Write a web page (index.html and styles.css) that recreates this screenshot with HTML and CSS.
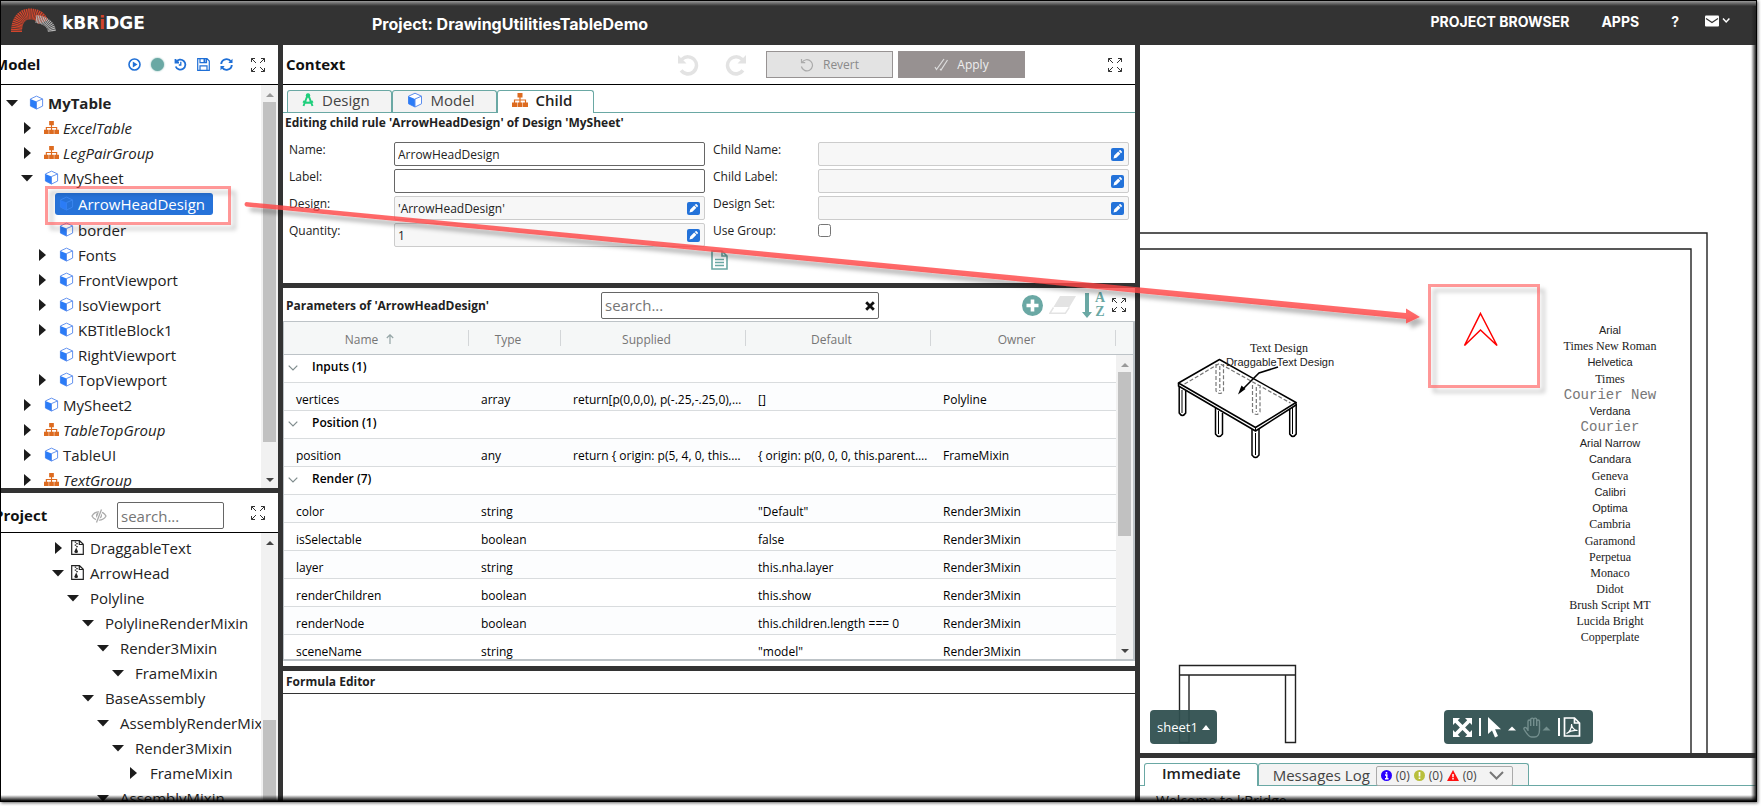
FILE: index.html
```html
<!DOCTYPE html>
<html lang="en">
<head>
<meta charset="utf-8">
<title>kBridge - DrawingUtilitiesTableDemo</title>
<link rel="stylesheet" href="styles.css">
</head>
<body>
<svg class="defs" aria-hidden="true">
  <symbol id="cube" viewBox="0 0 16 16"><path d="M1.5 4.2 8 1.2l6.500 3v7.600L8 15l-6.500-3.200z" fill="#fff" stroke="#5b8dee"/><path d="M1.500 4.200 8 7v8l-6.500-3.200z" fill="#2b7cf7"/><path d="M8 7l6.500-2.800" fill="none" stroke="#5b8dee"/><path d="M8 7v8" stroke="#5b8dee"/></symbol>
  <symbol id="cube-sel" viewBox="0 0 16 16"><path d="M1.500 4.200 8 1.200l6.500 3v7.600L8 15l-6.500-3.200zM8 7l6.500-2.800M8 7v8" fill="none" stroke="#3c86f0"/><path d="M1.500 4.200 8 7v8l-6.500-3.200z" fill="#2b7cf7"/></symbol>
  <symbol id="sitemap" viewBox="0 0 16 14"><path d="M5.500 0h5v4.500h-5zM0 9.500h5V14H0zM5.500 9.500h5V14h-5zM11 9.500h5V14h-5z" fill="#dd6b20"/><path d="M8 4v6M2.500 10V7h11v3" fill="none" stroke="#dd6b20" stroke-width="1.200"/></symbol>
  <symbol id="down" viewBox="0 0 12 8"><path d="M0 1h12L6 7.500z" fill="#1c1c1c"/></symbol>
  <symbol id="right" viewBox="0 0 8 12"><path d="M1 0v12L8 6z" fill="#1c1c1c"/></symbol>
  <symbol id="expand" viewBox="0 0 14 14"><path d="M.5 4V.5H4M.5.5l4.500 4.500M10 .5h3.500V4M13.500.5 9 5M.5 10v3.500H4M.5 13.500 5 9M10 13.500h3.500V10M13.500 13.500 9 9" fill="none" stroke="#333"/></symbol>
  <symbol id="archive" viewBox="0 0 13 15"><path d="M.7.7h7.800l3.800 3.600v10H.7zM8.300.7v3.800h4" fill="none" stroke="#222" stroke-width="1.200"/><path d="M4.500 1.500v1.200M6 3v1.200M4.500 4.500v1.200M6 6v1.200" stroke="#222" stroke-width="1.500"/><path d="M5.200 7.500l1.800 4a1.800 1.600 0 1 1-3.600 0z" fill="#222"/></symbol>
  <symbol id="pencil" viewBox="0 0 13 13"><rect width="13" height="13" rx="2" fill="#2372d9"/><path d="M2.500 10.500l.7-2.900 4-4 2.200 2.200-4 4zM7.800 3l.8-.8c.3-.3.7-.3 1 0l1.200 1.200c.3.300.3.700 0 1l-.8.800z" fill="#fff"/></symbol>
  <symbol id="undo" viewBox="0 0 22 22"><path d="M1 1v8.500h8.500L6.300 6.300a6.800 6.800 0 1 1-.8 9l-2.800 2.300A10.300 10.300 0 1 0 3.900 3.900z" fill="#e3e3e3"/></symbol>
  <symbol id="chev" viewBox="0 0 10 6"><path d="M.7.700 5 5 9.300.7" fill="none" stroke="#7f8c8d" stroke-width="1.200"/></symbol>
</svg>

<div class="app">
  <header class="topbar">
    <div class="brand">
      <svg class="logo" viewBox="0 0 46 24" aria-hidden="true">
        <g fill="none"><path d="M5.500 24c0-11 5-18 13.500-18 7 0 11 3 13 8" stroke="#d2452c" stroke-dasharray="1.200 .5" stroke-width="11"/><path d="M25 11c8 1 15 4 16 13" stroke="#b8b8b8" stroke-dasharray="1 .6" stroke-width="8"/></g>
      </svg>
      <span class="brand-name">kBR<span class="brand-dot">i</span>DGE</span>
    </div>
    <h1 class="project-title">Project: DrawingUtilitiesTableDemo</h1>
    <nav class="nav">
      <a href="#">PROJECT BROWSER</a><a href="#">APPS</a><a href="#">?</a>
      <a href="#" class="mail" aria-label="Messages"><svg width="25" height="12" viewBox="0 0 25 12"><path d="M0 1.500Q0 .5 1 .5h12q1 0 1 1v9q0 1-1 1H1q-1 0-1-1z" fill="#fff"/><path d="M1 3.500l6 4 6-4" fill="none" stroke="#333" stroke-width="1.200"/><path d="M18 3.500l3.200 3.500 3.200-3.500" fill="none" stroke="#fff" stroke-width="1.500"/></svg></a>
    </nav>
  </header>

  <main class="workspace">
    <div class="col">
      <section class="panel model">
        <div class="bar left-bar">
          <h2 class="cut">Model</h2>
          <div class="model-tools">
            <button class="ib" aria-label="Run"><svg width="13" height="13" viewBox="0 0 13 13"><circle cx="6.500" cy="6.500" r="5.500" fill="none" stroke="#1f6fd6" stroke-width="1.600"/><path d="M4.800 3.500v6l4.700-3z" fill="#1f6fd6"/></svg></button>
            <span class="dot"></span>
            <button class="ib" aria-label="History"><svg width="13" height="13" viewBox="0 0 13 13"><path d="M1.500 1v3.500H5M2 4.200a5 5 0 1 1-.3 4.300" fill="none" stroke="#1f6fd6" stroke-width="1.800"/><path d="M6.800 3.800V7H4.800" fill="none" stroke="#1f6fd6" stroke-width="1.300"/></svg></button>
            <button class="ib" aria-label="Save"><svg width="13" height="13" viewBox="0 0 13 13"><path d="M.7.700h9.300l2.300 2.300v9.300H.7zM3 .7v4h6.500v-4M3 12V7.800h7V12" fill="none" stroke="#1f6fd6" stroke-width="1.200"/><path d="M6.500 1h2v3h-2z" fill="#1f6fd6"/></svg></button>
            <button class="ib" aria-label="Refresh"><svg width="13" height="13" viewBox="0 0 13 13"><path d="M1.200 6a5.300 5.300 0 0 1 9.800-2.300M11.800 7A5.300 5.300 0 0 1 2 9.300" fill="none" stroke="#1f6fd6" stroke-width="1.900"/><path d="M12.500.8V5H8.300zM.5 12.200V8h4.200z" fill="#1f6fd6"/></svg></button>
            <button class="ib big" aria-label="Expand"><svg width="14" height="14"><use href="#expand"/></svg></button>
          </div>
        </div>
        <div class="tree-wrap">
          <ul class="tree">
            <li class="l0 b"><svg class="car"><use href="#down"/></svg><svg class="ic"><use href="#cube"/></svg>MyTable</li>
            <li class="l1 i"><svg class="car"><use href="#right"/></svg><svg class="ic"><use href="#sitemap"/></svg>ExcelTable</li>
            <li class="l1 i"><svg class="car"><use href="#right"/></svg><svg class="ic"><use href="#sitemap"/></svg>LegPairGroup</li>
            <li class="l1"><svg class="car"><use href="#down"/></svg><svg class="ic"><use href="#cube"/></svg>MySheet</li>
            <li class="l2 current"><span class="car"></span><span class="sel"><svg class="ic"><use href="#cube-sel"/></svg>ArrowHeadDesign</span></li>
            <li class="l2"><span class="car"></span><svg class="ic"><use href="#cube"/></svg>border</li>
            <li class="l2"><svg class="car"><use href="#right"/></svg><svg class="ic"><use href="#cube"/></svg>Fonts</li>
            <li class="l2"><svg class="car"><use href="#right"/></svg><svg class="ic"><use href="#cube"/></svg>FrontViewport</li>
            <li class="l2"><svg class="car"><use href="#right"/></svg><svg class="ic"><use href="#cube"/></svg>IsoViewport</li>
            <li class="l2"><svg class="car"><use href="#right"/></svg><svg class="ic"><use href="#cube"/></svg>KBTitleBlock1</li>
            <li class="l2"><span class="car"></span><svg class="ic"><use href="#cube"/></svg>RightViewport</li>
            <li class="l2"><svg class="car"><use href="#right"/></svg><svg class="ic"><use href="#cube"/></svg>TopViewport</li>
            <li class="l1"><svg class="car"><use href="#right"/></svg><svg class="ic"><use href="#cube"/></svg>MySheet2</li>
            <li class="l1 i"><svg class="car"><use href="#right"/></svg><svg class="ic"><use href="#sitemap"/></svg>TableTopGroup</li>
            <li class="l1"><svg class="car"><use href="#right"/></svg><svg class="ic"><use href="#cube"/></svg>TableUI</li>
            <li class="l1 i"><svg class="car"><use href="#right"/></svg><svg class="ic"><use href="#sitemap"/></svg>TextGroup</li>
          </ul>
          <div class="sb"><span class="up dim"></span><span class="thumb t-model"></span><span class="dn"></span></div>
        </div>
      </section>

      <section class="panel project">
        <div class="bar left-bar low">
          <h2 class="cut">Project</h2>
          <div class="project-tools">
            <svg width="16" height="14" viewBox="0 0 16 14" aria-hidden="true"><path d="M1 7c3-5.500 11-5.500 14 0-3 5.500-11 5.500-14 0z" fill="none" stroke="#aaa" stroke-width="1.300"/><circle cx="8" cy="6.500" r="3" fill="#aaa"/><path d="M10.500.5l-5 13" stroke="#fff" stroke-width="3"/><path d="M10.500.5l-5 13" stroke="#aaa" stroke-width="1.300"/></svg>
            <input class="search small" type="text" placeholder="search..." aria-label="Search project">
            <button class="ib big" aria-label="Expand"><svg width="14" height="14"><use href="#expand"/></svg></button>
          </div>
        </div>
        <div class="tree-wrap">
          <ul class="tree plain">
            <li class="l3"><svg class="car"><use href="#right"/></svg><svg class="ic"><use href="#archive"/></svg>DraggableText</li>
            <li class="l3"><svg class="car"><use href="#down"/></svg><svg class="ic"><use href="#archive"/></svg>ArrowHead</li>
            <li class="l4"><svg class="car"><use href="#down"/></svg>Polyline</li>
            <li class="l5"><svg class="car"><use href="#down"/></svg>PolylineRenderMixin</li>
            <li class="l6"><svg class="car"><use href="#down"/></svg>Render3Mixin</li>
            <li class="l7"><svg class="car"><use href="#down"/></svg>FrameMixin</li>
            <li class="l5"><svg class="car"><use href="#down"/></svg>BaseAssembly</li>
            <li class="l6"><svg class="car"><use href="#down"/></svg>AssemblyRenderMixin</li>
            <li class="l7"><svg class="car"><use href="#down"/></svg>Render3Mixin</li>
            <li class="l8"><svg class="car"><use href="#right"/></svg>FrameMixin</li>
            <li class="l6"><svg class="car"><use href="#down"/></svg>AssemblyMixin</li>
          </ul>
          <div class="sb"><span class="up"></span><span class="thumb t-project"></span></div>
        </div>
      </section>
    </div>

    <div class="col">
      <section class="panel context">
        <div class="bar">
          <h2>Context</h2>
          <div class="context-tools">
            <button class="ib undo" aria-label="Undo" disabled><svg width="22" height="22"><use href="#undo"/></svg></button>
            <button class="ib redo" aria-label="Redo" disabled><svg width="22" height="22" viewBox="0 0 22 22"><path d="M21 1v8.500h-8.500l3.200-3.200a6.800 6.800 0 1 0 .8 9l2.800 2.300A10.300 10.300 0 1 1 18.100 3.900z" fill="#e3e3e3"/></svg></button>
            <button class="act revert" disabled><svg width="14" height="14" viewBox="0 0 14 14"><path d="M1.500 1v3.700h3.700M2 4.500a5.600 5.600 0 1 1-.6 4" fill="none" stroke="#aaa" stroke-width="1.200"/></svg>Revert</button>
            <button class="act apply" disabled><svg width="14" height="14" viewBox="0 0 14 14"><path d="M1 9l1.500 2.500L10 1M6 11l1 1L13.500 2" fill="none" stroke="#ddd" stroke-width="1.200"/></svg>Apply</button>
            <button class="ib big" aria-label="Expand"><svg width="14" height="14"><use href="#expand"/></svg></button>
          </div>
        </div>
        <div class="tabs">
          <button class="tab"><svg width="12" height="14" viewBox="0 0 12 14"><path d="M6 1 1.500 13M6 1l4.500 12M1 8.500c3 1.500 7 1.500 10 0" fill="none" stroke="#1fcf7c" stroke-width="2"/><circle cx="6" cy="2.500" r="2.200" fill="#1fcf7c"/></svg>Design</button>
          <button class="tab"><svg width="16" height="16"><use href="#cube"/></svg>Model</button>
          <button class="tab on"><svg width="16" height="14"><use href="#sitemap"/></svg>Child</button>
        </div>
        <p class="editing">Editing child rule 'ArrowHeadDesign' of Design 'MySheet'</p>
        <form class="form">
          <label for="f-name">Name:</label><div class="field"><input id="f-name" type="text" value="ArrowHeadDesign"></div>
          <label class="c3" for="f-cname">Child Name:</label><div class="field"><input id="f-cname" class="ro" type="text" readonly><svg class="pen"><use href="#pencil"/></svg></div>
          <label for="f-label">Label:</label><div class="field"><input id="f-label" type="text"></div>
          <label class="c3" for="f-clabel">Child Label:</label><div class="field"><input id="f-clabel" class="ro" type="text" readonly><svg class="pen"><use href="#pencil"/></svg></div>
          <label for="f-design">Design:</label><div class="field"><input id="f-design" class="ro" type="text" readonly value="'ArrowHeadDesign'"><svg class="pen"><use href="#pencil"/></svg></div>
          <label class="c3" for="f-set">Design Set:</label><div class="field"><input id="f-set" class="ro" type="text" readonly><svg class="pen"><use href="#pencil"/></svg></div>
          <label for="f-qty">Quantity:</label><div class="field"><input id="f-qty" class="ro" type="text" readonly value="1"><svg class="pen"><use href="#pencil"/></svg></div>
          <label class="c3" for="f-group">Use Group:</label><div class="field"><input id="f-group" type="checkbox"></div>
          <button type="button" class="ib doc" aria-label="Description"><svg width="17" height="20" viewBox="0 0 17 20"><path d="M1 1h10l5 5v13H1zM11 1v5h5" fill="none" stroke="#6aa8a4" stroke-width="1.600"/><path d="M4 9.500h9M4 12.500h9M4 15.500h9" stroke="#6aa8a4" stroke-width="1.500"/></svg></button>
        </form>
      </section>

      <section class="panel params">
        <div class="pbar">
          <h3>Parameters of 'ArrowHeadDesign'</h3>
          <div class="psearch"><input class="search" type="text" placeholder="search..." aria-label="Search parameters"><svg class="clear" width="10" height="10" viewBox="0 0 10 10"><path d="M1.200 1.200l7.600 7.600M8.800 1.200 1.200 8.800" stroke="#111" stroke-width="2.800"/></svg></div>
          <div class="ptools">
            <button class="ib" aria-label="Add"><svg width="21" height="21" viewBox="0 0 21 21"><circle cx="10.500" cy="10.500" r="10.500" fill="#6aa8a4"/><path d="M10.500 4.500v12M4.500 10.500h12" stroke="#fff" stroke-width="3.600"/></svg></button>
            <button class="ib" aria-label="Erase"><svg width="27" height="18" viewBox="0 0 27 18"><path d="M11 0h16l-6.500 11H4.500z" fill="#e3e3e3"/><path d="M4.500 11.500.800 17.300h15.500l4-6" fill="none" stroke="#e3e3e3" stroke-width="1.500"/></svg></button>
            <button class="ib sort" aria-label="Sort A to Z"><svg width="10" height="25" viewBox="0 0 10 25"><path d="M3 0h4v19h3l-5 6-5-6h3z" fill="#6aa8a4"/></svg><span class="az"><span>A</span><span>Z</span></span></button>
            <button class="ib" aria-label="Expand"><svg width="14" height="14"><use href="#expand"/></svg></button>
          </div>
        </div>
        <div class="grid-wrap">
          <table class="grid">
            <colgroup><col class="w-name"><col class="w-type"><col class="w-wide"><col class="w-wide"><col class="w-wide"><col class="w-end"></colgroup>
            <thead><tr><th>Name<svg class="asc" width="8" height="10" viewBox="0 0 8 10"><path d="M4 10V1M.8 4 4 .8 7.200 4" fill="none" stroke="#95a5a6" stroke-width="1.200"/></svg></th><th>Type</th><th>Supplied</th><th>Default</th><th>Owner</th><th class="end"></th></tr></thead>
            <tbody>
              <tr class="grp"><td colspan="6"><svg class="chev"><use href="#chev"/></svg>Inputs (1)</td></tr>
              <tr class="alt"><td>vertices</td><td>array</td><td>return[p(0,0,0), p(-.25,-.25,0),…</td><td>[]</td><td>Polyline</td><td></td></tr>
              <tr class="grp"><td colspan="6"><svg class="chev"><use href="#chev"/></svg>Position (1)</td></tr>
              <tr class="alt"><td>position</td><td>any</td><td>return { origin: p(5, 4, 0, this.…</td><td>{ origin: p(0, 0, 0, this.parent.…</td><td>FrameMixin</td><td></td></tr>
              <tr class="grp"><td colspan="6"><svg class="chev"><use href="#chev"/></svg>Render (7)</td></tr>
              <tr class="alt"><td>color</td><td>string</td><td></td><td>"Default"</td><td>Render3Mixin</td><td></td></tr>
              <tr><td>isSelectable</td><td>boolean</td><td></td><td>false</td><td>Render3Mixin</td><td></td></tr>
              <tr class="alt"><td>layer</td><td>string</td><td></td><td>this.nha.layer</td><td>Render3Mixin</td><td></td></tr>
              <tr><td>renderChildren</td><td>boolean</td><td></td><td>this.show</td><td>Render3Mixin</td><td></td></tr>
              <tr class="alt"><td>renderNode</td><td>boolean</td><td></td><td>this.children.length === 0</td><td>Render3Mixin</td><td></td></tr>
              <tr><td>sceneName</td><td>string</td><td></td><td>"model"</td><td>Render3Mixin</td><td></td></tr>
            </tbody>
          </table>
          <div class="sb"><span class="up dim"></span><span class="thumb t-params"></span><span class="dn"></span></div>
        </div>
      </section>

      <section class="panel formula"><h3>Formula Editor</h3></section>
    </div>

    <div class="col">
      <section class="panel canvas">
        <svg class="sheet" width="620" height="720" viewBox="1140 45 620 720">
          <g fill="none" stroke="#222" stroke-width="1.400">
            <path d="M1130 233h577v600M1130 249h561v600"/>
            <path d="M1179.500 665.500h116v9.500h-116zM1179.500 675v67.500h9.500V675M1285.500 675v67.500h10V675"/>
          </g>
          <g fill="#fff" stroke="#000" stroke-width="1.500" stroke-linejoin="round">
            <path d="M1179.200 387v26q3.200 5 6.500 0v-22M1215.500 408v26q3.500 5 7 0v-21M1289.700 408v26q3.200 5 6.500 0v-30M1252 428v27q3.500 5 7 0v-26"/>
            <path d="M1178.500 383v3l77 45 40.500-26v-3"/>
            <path d="M1219.500 359.500 1178.500 383l77 44.500 40.500-25z"/>
            <path d="M1255.500 427.500v3M1182 390v23M1218.500 411v23M1255.500 433v22M1292.500 408v26" stroke-width="1"/>
          </g>
          <g fill="none" stroke="#777" stroke-width="1.200" stroke-dasharray="4 2">
            <path d="M1184.500 384l35-20.500 71 39.500M1216 364v27q3.700 5 7.500 0v-27M1252.500 385v27q3.700 5 7.500 0v-27M1219.800 366v25M1256.300 387v25"/>
          </g>
          <path d="M1278 367l-19 6-17 17" fill="none" stroke="#000" stroke-width="1.500"/>
          <path d="M1238 394.500l3.500-9 4 3.500z"/>
          <path d="M1480.500 313.500l16.500 32-16.500-15.500-16 15.500z" fill="none" stroke="#f00" stroke-width="1.500"/>
          <g class="lbl" text-anchor="middle" fill="#222">
            <text class="times" x="1279" y="352">Text Design</text>
            <text x="1280" y="366">DraggableText Design</text>
            <text x="1610" y="334">Arial</text>
            <text class="times" x="1610" y="350">Times New Roman</text>
            <text x="1610" y="366">Helvetica</text>
            <text class="times" x="1610" y="383">Times</text>
            <text class="cour" x="1610" y="399">Courier New</text>
            <text x="1610" y="415">Verdana</text>
            <text class="cour" x="1610" y="431">Courier</text>
            <text x="1610" y="447">Arial Narrow</text>
            <text x="1610" y="463">Candara</text>
            <text class="times" x="1610" y="480">Geneva</text>
            <text x="1610" y="496">Calibri</text>
            <text x="1610" y="512">Optima</text>
            <text class="times" x="1610" y="528">Cambria</text>
            <text class="times" x="1610" y="545">Garamond</text>
            <text class="times" x="1610" y="561">Perpetua</text>
            <text class="times" x="1610" y="577">Monaco</text>
            <text class="times" x="1610" y="593">Didot</text>
            <text class="times" x="1610" y="609">Brush Script MT</text>
            <text class="times" x="1610" y="625">Lucida Bright</text>
            <text class="times" x="1610" y="641">Copperplate</text>
          </g>
        </svg>
        <button class="sheet-btn">sheet1<svg width="8" height="5" viewBox="0 0 8 5"><path d="M4 0l4 5H0z" fill="#fff"/></svg></button>
        <div class="view-tools">
          <button class="ib" aria-label="Zoom to fit"><svg width="19" height="19" viewBox="0 0 19 19"><path d="M0 0h7L4.800 2.200l4.700 4.700 4.700-4.700L12 0h7v7l-2.200-2.200-4.700 4.700 4.700 4.700L19 12v7h-7l2.200-2.200-4.700-4.700-4.700 4.700L7 19H0v-7l2.200 2.200 4.700-4.700-4.700-4.700L0 7z" fill="#fff"/></svg></button>
          <span class="vsep"></span>
          <button class="ib" aria-label="Select"><svg width="28" height="21" viewBox="0 0 28 21"><path d="M0 0v17l4-3.600 3 7 3-1.300-2.900-6.800H13z" fill="#fff"/><path d="M24 9.500l4 4h-8z" fill="#fff"/></svg></button>
          <button class="ib" aria-label="Pan" disabled><svg width="28" height="21" viewBox="0 0 28 21"><path d="M5 14V4.500c0-2 2.700-2 2.700 0V9M7.700 9V2.800c0-2.200 3-2.200 3 0V9M10.700 9V2.800c0-2.200 3-2.200 3 0V9M13.700 9V4.500c0-2 2.800-2 2.800 0V13c0 4-2 7-5 7H8.500C6 20 3 15.500 1.200 12.500c-1-1.800 1-2.800 2.200-1.500L5 13" fill="none" stroke="#748f8e" stroke-width="1.400"/><path d="M23.500 9.500l4 4h-8z" fill="#748f8e"/></svg></button>
          <div class="pdf-group"><span class="vsep"></span>
          <button class="ib pdf" aria-label="Export PDF"><svg width="18" height="20" viewBox="0 0 17 20"><path d="M1 1h10l5 5v13H1zM11 1v5h5" fill="none" stroke="#fff" stroke-width="1.700"/><path d="M3 16.500c3-1 5.500-6 5-9.500 0 3 2.500 6.500 6 6.500-3-.5-7 0-11 3z" fill="none" stroke="#fff" stroke-width="1.200"/></svg></button></div>
        </div>
      </section>

      <section class="panel console">
        <div class="tabs">
          <button class="tab on">Immediate</button>
          <div class="tab log"><button class="ib log-name">Messages Log</button>
            <span class="counts">
              <svg width="11" height="11" viewBox="0 0 11 11"><circle cx="5.500" cy="5.500" r="5.500" fill="#2a00ff"/><path d="M5.500 2v1.700M4 5h1.800v3.500M4 8.700h3.500" stroke="#fff" stroke-width="1.500" fill="none"/></svg><span>(0)</span>
              <svg width="11" height="11" viewBox="0 0 11 11"><circle cx="5.500" cy="5.500" r="5.500" fill="#b9bf3c"/><path d="M5.500 2v4.500M5.500 7.500V9" stroke="#fff" stroke-width="1.700"/></svg><span>(0)</span>
              <svg width="12" height="11" viewBox="0 0 12 11"><path d="M6 0l6 11H0z" fill="#f11"/><path d="M6 4v3.200M6 8v1.500" stroke="#fff" stroke-width="1.500"/></svg><span>(0)</span>
              <svg class="more" width="15" height="9" viewBox="0 0 15 9"><path d="M1 1l6.500 6.500L14 1" fill="none" stroke="#777" stroke-width="2"/></svg>
            </span>
          </div>
        </div>
        <p class="welcome">Welcome to kBridge</p>
      </section>
    </div>
  </main>
  <div class="bevel"></div>
</div>

<svg class="notes" width="1761" height="806" viewBox="0 0 1761 806" aria-hidden="true">
  <defs><filter id="sh" x="-10%" y="-20%" width="125%" height="150%"><feDropShadow dx="5" dy="5" stdDeviation="2" flood-color="#000" flood-opacity=".35"/></filter></defs>
  <g filter="url(#sh)" fill="none" stroke="#ff4646" stroke-opacity=".55" stroke-width="3"><path d="M46.500 187.500h183v36h-183zM1429.500 285.500h109v101h-109z"/></g>
  <path filter="url(#sh)" d="M246 202q-3 2 0 4.500L1406 319v4.500l14-6.500-14-8.500v4.500z" fill="#ff4646" fill-opacity=".8"/>
</svg>
</body>
</html>
```
FILE: styles.css
```css
* { box-sizing: border-box; }
html, body { height: 100%; }
body { margin: 0; background: #fff; font-family: "Open Sans", "Noto Sans", sans-serif; color: #222; overflow: hidden; }
button, input { font-family: inherit; }
h1, h2, h3, p, ul { margin: 0; padding: 0; }
.defs { position: absolute; width: 0; height: 0; }

.app { position: relative; display: flex; flex-direction: column; height: calc(100vh - 4px); margin-right: 4px; border: 1px solid #000; background: #333; box-shadow: 1px 1px 3px #666; overflow: hidden; }
.bevel { position: absolute; inset: 0; pointer-events: none; background:
  linear-gradient(#999, #333) top / 100% 5px no-repeat,
  linear-gradient(transparent, #000) bottom / 100% 6px no-repeat,
  linear-gradient(90deg, transparent, #222) right / 5px 100% no-repeat; }
.notes { position: absolute; left: 0; top: 0; pointer-events: none; }

.topbar { flex: none; display: flex; align-items: center; height: 44px; padding: 0 26px 0 10px; color: #fff; }
.brand { display: flex; align-items: center; gap: 5px; width: 361px; }
.logo { width: 46px; height: 24px; margin-bottom: 6px; }
.brand-name { font: 700 17px "DejaVu Sans", sans-serif; }
.brand-dot { color: #d2452c; }
.project-title { flex: 1; font: 700 16px "Inter", sans-serif; padding-top: 2px; }
.nav { display: flex; align-items: center; gap: 32px; padding-bottom: 4px; }
.nav a { color: #fff; text-decoration: none; font: 700 14px "Inter", sans-serif; }
.nav .mail { margin-left: -6px; height: 16px; }

.workspace { flex: 1; min-height: 0; display: grid; grid-template-columns: 277px minmax(0, 852fr) minmax(0, 616fr); gap: 5px; }
.col { display: flex; flex-direction: column; gap: 5px; min-height: 0; min-width: 0; }
.panel { background: #fff; overflow: hidden; display: flex; flex-direction: column; min-height: 0; }
.model { flex: 443 1 0; }
.project { flex: 308 1 0; }
.params { flex: 378 1 0; }
.formula { flex: 130 1 0; }
.canvas { position: relative; flex: 1; }

.bar { flex: none; height: 40px; display: flex; align-items: center; justify-content: space-between; padding: 0 13px 0 3px; border-bottom: 1px solid #000; }
.bar h2 { font-size: 15px; font-weight: 700; color: #111; padding-bottom: 2px; }
.bar .cut { margin-left: -10px; }
.bar.low { padding-top: 6px; }
.low .big { margin-bottom: 6px; }
.model-tools, .project-tools, .context-tools, .ptools { display: flex; align-items: center; }
.model-tools { gap: 10px; }
.model-tools .big { margin-left: 8px; }
.project-tools { gap: 10px; }
.project-tools .big { margin-left: 17px; }
.ib { display: flex; align-items: center; border: 0; padding: 0; background: none; color: inherit; }
.dot { width: 13px; height: 13px; border-radius: 50%; background: #6aa8a4; box-shadow: 0 0 2px #6aa8a4; }
.search { width: 100%; height: 27px; border: 1px solid #666; border-radius: 2px; padding: 0 3px; font-size: 15px; color: #222; }
.search::placeholder { color: #757575; opacity: 1; }
.search.small { width: 107px; }

.tree-wrap { position: relative; flex: 1; overflow: hidden; padding-right: 17px; }
.tree { list-style: none; padding-top: 5px; overflow: hidden; }
.plain { padding-top: 2px; }
.tree li { display: flex; align-items: center; height: 25px; white-space: nowrap; font-size: 15px; padding-left: 5px; }
.tree .current { height: 27px; }
.car { width: 12px; height: 12px; margin-right: 11px; flex: none; }
.ic { width: 15px; height: 15px; margin-right: 4px; flex: none; }
.tree .b { font-weight: 700; }
.tree .i { font-style: italic; }
.tree .l1 { padding-left: 20px; }
.tree .l2 { padding-left: 35px; }
.tree .l3 { padding-left: 51px; }
.tree .l3 .car { margin-right: 6px; }
.tree .l3 .ic { margin-right: 5px; }
.tree .l4 { padding-left: 66px; }
.tree .l5 { padding-left: 81px; }
.tree .l6 { padding-left: 96px; }
.tree .l7 { padding-left: 111px; }
.tree .l8 { padding-left: 126px; }
.sel { display: flex; align-items: center; height: 22px; margin-left: -4px; padding: 0 8px 0 4px; border-radius: 3px; background: #2672d9; color: #fff; }

.sb { position: absolute; top: 0; right: 0; bottom: 0; width: 17px; background: #f1f1f1; }
.thumb { position: absolute; left: 2px; right: 2px; background: #c1c1c1; }
.t-model { top: 17px; bottom: 46px; }
.t-project { top: 187px; bottom: 0; }
.t-params { top: 17px; height: 164px; }
.up, .dn { position: absolute; left: 5px; border: 4px solid transparent; }
.up { top: 4px; border-bottom-color: #444; }
.up.dim { border-bottom-color: #999; }
.dn { bottom: 2px; border-top-color: #444; }

.undo { margin-right: 26px; }
.redo { margin-right: 19px; }
.act { display: flex; align-items: center; justify-content: center; gap: 9px; width: 127px; height: 27px; font-size: 12px; }
.revert { background: #e3e3e3; border: 1px solid #979393; color: #8a8a8a; margin-right: 5px; }
.apply { background: #979191; border: 0; color: #eee; margin-right: 83px; }

.tabs { display: flex; align-items: stretch; height: 23px; margin-top: 5px; padding-left: 4px; border-bottom: 1px solid #6aa8a4; flex: none; }
.tab { display: flex; align-items: center; gap: 8px; height: 22px; margin: 0; border: 1px solid #6aa8a4; border-bottom: 0; border-radius: 3px 3px 0 0; background: #f3f3f3; color: #444; font-size: 15px; padding: 0 21px 4px 14px; }
.tab.on { height: 23px; background: #fff; color: #222; font-weight: 600; }
.editing { font-size: 12px; font-weight: 700; line-height: 16px; padding: 2px 2px 0; }
.form { display: grid; grid-template-columns: 105px 1fr 113px 1fr; grid-auto-rows: 24px; row-gap: 3px; padding: 11px 6px 9px; }
.form label { font-size: 12px; line-height: 16px; }
.c3 { padding-left: 8px; }
.field { position: relative; }
.field input[type=text] { display: block; width: 100%; height: 24px; border: 1px solid #666; border-radius: 2px; padding: 0 3px; font-size: 12px; color: #222; }
.field input.ro[type=text] { background: #f7f7f7; border-color: #ccc; }
.field input[type=checkbox] { margin: 1px 0 0; width: 13px; height: 13px; display: block; }
.pen { position: absolute; right: 5px; top: 6px; width: 13px; height: 13px; }
.doc { grid-column: 3; margin-left: 6px; align-self: start; }

.pbar { display: grid; grid-template-columns: 315px 278px 1fr; align-items: center; height: 33px; flex: none; padding: 1px 9px 0 3px; }
.pbar h3, .formula h3 { font-size: 12px; font-weight: 700; }
.psearch { position: relative; }
.psearch .search { display: block; }
.clear { position: absolute; right: 4px; top: 9px; }
.ptools { justify-content: flex-end; gap: 6px; }
.sort { gap: 2px; }
.az { display: flex; flex-direction: column; font: 700 14px/14px "Liberation Serif", serif; color: #6aa8a4; width: 12px; }
.grid-wrap { position: relative; flex: 1; overflow: hidden; border: 1px solid #bdc3c7; border-right-width: 2px; border-bottom-width: 2px; margin-bottom: 5px; }
.grid-wrap .sb { top: 33px; }
.grid { width: 100%; table-layout: fixed; border-collapse: separate; border-spacing: 0; font-family: "Open Sans", "Noto Sans", sans-serif; font-size: 12px; color: #000; }
.w-name { width: 185px; }
.w-type { width: 92px; }
.w-wide { width: 185px; }
.w-end { width: 17px; }
.grid th { height: 33px; padding: 3px 14px 0 0; background: linear-gradient(#d3d6d8, #d3d6d8) right / 1px 16px no-repeat #f5f7f7; border-bottom: 1px solid #bdc3c7; color: #757575; font-weight: 400; }
.grid th.end { background: #f5f7f7; }
.asc { margin-left: 8px; }
.grid td { height: 28px; padding: 7px 0 0 12px; border-bottom: 1px solid #d9dcde; white-space: nowrap; line-height: 20px; }
.grid .alt td { background: #fcfdfe; }
.grid .grp td { padding: 0 4px 3px; font-weight: 600; }
.chev { width: 10px; height: 6px; margin-right: 14px; vertical-align: middle; }
.formula h3 { line-height: 22px; padding-left: 3px; border-bottom: 1px solid #333; }

.sheet { display: block; flex: none; }
.lbl { font: 11px "Liberation Sans", Arial, sans-serif; }
.times { font-family: "Liberation Serif", serif; font-size: 12px; }
.cour { font-family: "Liberation Mono", monospace; font-size: 14px; fill: #777; }
.sheet-btn, .view-tools { position: absolute; bottom: 9px; height: 34px; display: flex; align-items: center; border: 0; border-radius: 4px; background: rgba(47, 79, 79, .94); color: #fff; }
.sheet-btn { left: 10px; gap: 4px; padding: 0 7px; font-size: 13px; }
.view-tools { right: 163px; width: 149px; justify-content: space-between; padding: 0 12px 0 9px; }
.vsep { width: 2px; height: 18px; background: #fff; }
.pdf-group { display: flex; align-items: center; gap: 3px; }

.console { height: 43px; flex: none; }
.console .tab.on { padding: 0 16px 5px 17px; }
.console .log { gap: 6px; padding: 0 15px 0 14px; }
.log-name { font-size: 15px; }
.counts { display: flex; align-items: center; gap: 4px; border: 1px solid #aaa; border-radius: 2px; height: 20px; padding: 0 8px 0 4px; font-size: 12px; margin-top: 2px; }
.more { margin-left: 8px; }
.welcome { font-size: 14px; line-height: 20px; padding: 5px 16px; }
```
